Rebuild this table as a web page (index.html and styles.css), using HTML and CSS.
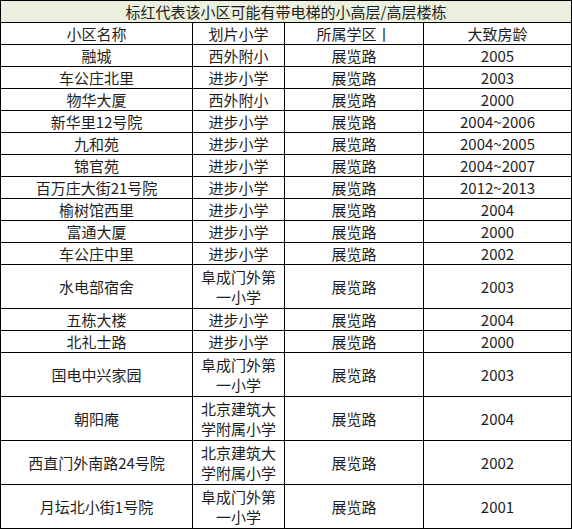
FILE: index.html
```html
<!DOCTYPE html>
<html lang="zh-CN">
<head>
<meta charset="utf-8">
<title>小高层/高层楼栋</title>
<link rel="stylesheet" href="styles.css">
</head>
<body>
<table class="sheet">
  <colgroup>
    <col class="c-name">
    <col class="c-school">
    <col class="c-district">
    <col class="c-age">
  </colgroup>
  <thead>
    <tr><th class="title" colspan="4">标红代表该小区可能有带电梯的小高层/高层楼栋</th></tr>
    <tr><th>小区名称</th><th>划片小学</th><th>所属学区丨</th><th>大致房龄</th></tr>
  </thead>
  <tbody>
    <tr><td>融城</td><td>西外附小</td><td>展览路</td><td>2005</td></tr>
    <tr><td>车公庄北里</td><td>进步小学</td><td>展览路</td><td>2003</td></tr>
    <tr><td>物华大厦</td><td>西外附小</td><td>展览路</td><td>2000</td></tr>
    <tr><td>新华里12号院</td><td>进步小学</td><td>展览路</td><td>2004~2006</td></tr>
    <tr><td>九和苑</td><td>进步小学</td><td>展览路</td><td>2004~2005</td></tr>
    <tr><td>锦官苑</td><td>进步小学</td><td>展览路</td><td>2004~2007</td></tr>
    <tr><td>百万庄大街21号院</td><td>进步小学</td><td>展览路</td><td>2012~2013</td></tr>
    <tr><td>榆树馆西里</td><td>进步小学</td><td>展览路</td><td>2004</td></tr>
    <tr><td>富通大厦</td><td>进步小学</td><td>展览路</td><td>2000</td></tr>
    <tr><td>车公庄中里</td><td>进步小学</td><td>展览路</td><td>2002</td></tr>
    <tr class="tall"><td>水电部宿舍</td><td>阜成门外第一小学</td><td>展览路</td><td>2003</td></tr>
    <tr><td>五栋大楼</td><td>进步小学</td><td>展览路</td><td>2004</td></tr>
    <tr><td>北礼士路</td><td>进步小学</td><td>展览路</td><td>2000</td></tr>
    <tr class="tall"><td>国电中兴家园</td><td>阜成门外第一小学</td><td>展览路</td><td>2003</td></tr>
    <tr class="tall"><td>朝阳庵</td><td>北京建筑大学附属小学</td><td>展览路</td><td>2004</td></tr>
    <tr class="tall"><td>西直门外南路24号院</td><td>北京建筑大学附属小学</td><td>展览路</td><td>2002</td></tr>
    <tr class="tall"><td>月坛北小街1号院</td><td>阜成门外第一小学</td><td>展览路</td><td>2001</td></tr>
  </tbody>
</table>
</body>
</html>
```

FILE: styles.css
```css
html, body {
  margin: 0;
  padding: 0;
  background: #ffffff;
}

.sheet {
  border-collapse: collapse;
  table-layout: fixed;
  width: 571px;
  font-family: "Noto Sans CJK SC", "Noto Sans", sans-serif;
  font-size: 15px;
  color: #1e1e1e;
}

.c-name { width: 192px; }
.c-school { width: 92px; }
.c-district { width: 139px; }
.c-age { width: 148px; }

.sheet th,
.sheet td {
  border: 1px solid #000;
  padding: 0 4px;
  height: 21px;
  line-height: 21px;
  text-align: center;
  vertical-align: middle;
  font-weight: normal;
  white-space: normal;
}

.sheet th.title {
  background: #ebf1de;
}

.sheet tr.tall td {
  height: 43px;
  line-height: 20px;
}
```
